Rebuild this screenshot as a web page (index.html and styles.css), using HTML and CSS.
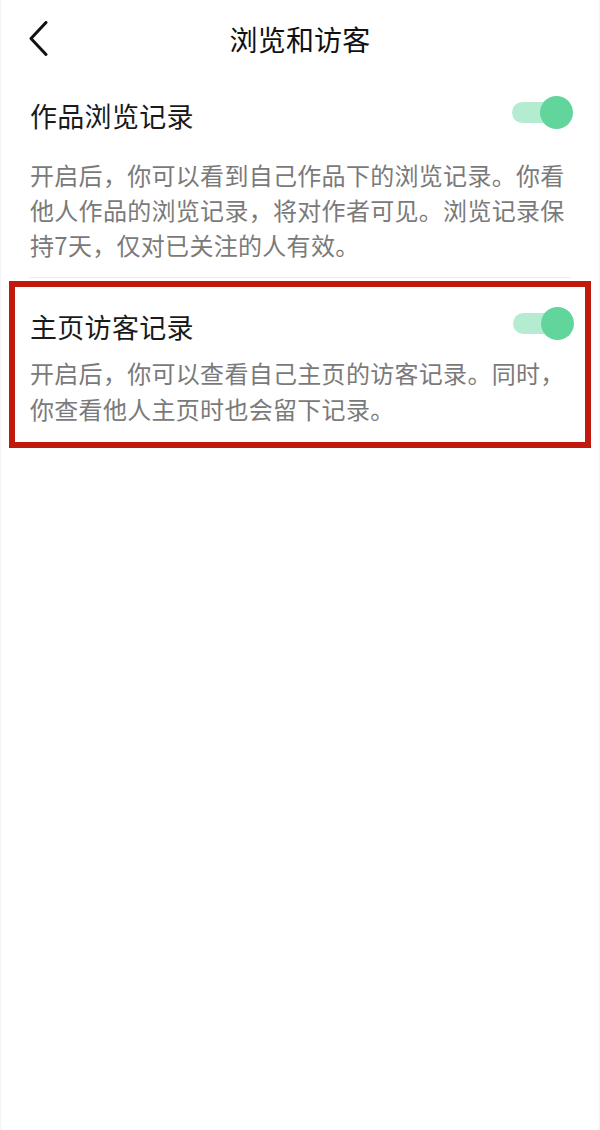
FILE: index.html
```html
<!DOCTYPE html>
<html lang="zh-CN">
<head>
<meta charset="utf-8">
<title>浏览和访客</title>
<link rel="stylesheet" href="styles.css">
</head>
<body>
<div class="page">
  <header class="nav">
    <span class="nav-back">
      <svg width="20" height="36" viewBox="0 0 20 36" aria-hidden="true">
        <polyline points="17,1.5 2,17.5 17,33.5" fill="none" stroke="#111" stroke-width="3" stroke-linecap="round" stroke-linejoin="round"/>
      </svg>
    </span>
    <h1 class="nav-title">浏览和访客</h1>
    <span></span>
  </header>

  <section class="setting">
    <div class="setting-row">
      <span class="setting-name">作品浏览记录</span>
      <span class="switch is-on"><span class="switch-track"></span><span class="switch-knob"></span></span>
    </div>
    <p class="setting-desc">开启后，你可以看到自己作品下的浏览记录。你看他人作品的浏览记录，将对作者可见。浏览记录保持7天，仅对已关注的人有效。</p>
  </section>
  <div class="divider"></div>

  <section class="setting setting--marked">
    <div class="setting-row">
      <span class="setting-name">主页访客记录</span>
      <span class="switch is-on"><span class="switch-track"></span><span class="switch-knob"></span></span>
    </div>
    <p class="setting-desc">开启后，你可以查看自己主页的访客记录。同时，你查看他人主页时也会留下记录。</p>
  </section>
</div>
</body>
</html>
```

FILE: styles.css
```css
html, body {
  margin: 0;
  padding: 0;
  background: #ffffff;
}

body {
  font-family: "Noto Sans CJK SC", "Noto Sans", sans-serif;
  color: #1a1a1a;
}

.page {
  width: 600px;
  min-height: 1130px;
  border-left: 1px solid #f4f4f4;
  border-right: 1px solid #f4f4f4;
  box-sizing: border-box;
}

/* top navigation bar */
.nav {
  height: 78px;
  display: grid;
  grid-template-columns: 1fr auto 1fr;
  align-items: center;
  padding: 0 28px;
}

.nav-back {
  display: flex;
  align-items: center;
  height: 36px;
}

.nav-title {
  margin: 0;
  font-size: 28px;
  font-weight: 400;
  color: #111111;
  line-height: 1;
  letter-spacing: 0.2px;
}

/* setting block: title row with switch, then description */
.setting {
  padding: 12px 26px 0 29px;
}

.setting-row {
  height: 50px;
  display: flex;
  align-items: center;
  justify-content: space-between;
}

.setting-name {
  font-size: 27px;
  line-height: 1;
  color: #1a1a1a;
  letter-spacing: 0.3px;
}

.setting-desc {
  margin: 17px 0 0;
  font-size: 24px;
  line-height: 35px;
  color: #7a7a7a;
  letter-spacing: 0.3px;
}

.divider {
  height: 1px;
  background: #ececec;
  margin: 15px 28px 0 28px;
}

.setting--marked {
  margin: 3px 8px 0 8px;
  border: 6px solid #c01a0e;
  padding: 14px 11px 15px 15px;
}

.setting--marked .setting-desc {
  margin-top: 4px;
  line-height: 36px;
}

/* toggle switch */
.switch {
  position: relative;
  width: 61px;
  height: 33px;
  flex: none;
  margin-bottom: 6px;
}

.switch-track {
  position: absolute;
  left: 0;
  top: 6px;
  width: 54px;
  height: 21px;
  border-radius: 11px;
  background: #b3ecd0;
}

.switch-knob {
  position: absolute;
  right: 0;
  top: 0;
  width: 33px;
  height: 33px;
  border-radius: 50%;
  background: #62d59c;
}
```
